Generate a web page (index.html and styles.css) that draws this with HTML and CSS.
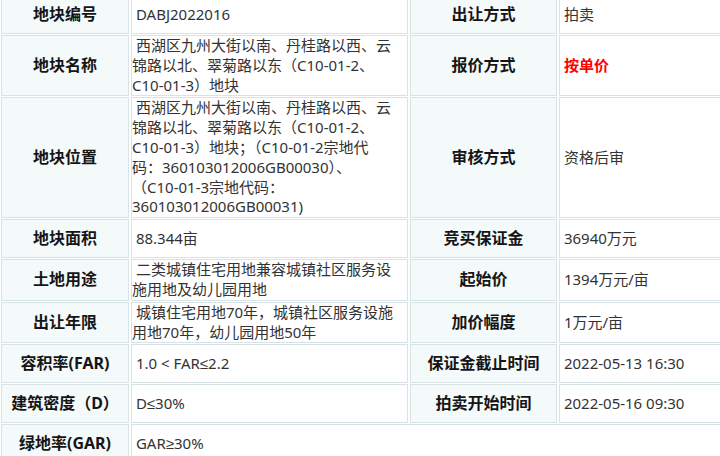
FILE: index.html
```html
<!DOCTYPE html>
<html lang="zh-CN">
<head>
<meta charset="utf-8">
<title>地块信息</title>
<link rel="stylesheet" href="styles.css">
</head>
<body>
<table class="info">
  <colgroup>
    <col class="c1">
    <col class="c2">
    <col class="c3">
    <col class="c4">
  </colgroup>
  <tbody>
    <tr>
      <td class="label">地块编号</td>
      <td class="val">&nbsp;DABJ2022016</td>
      <td class="label">出让方式</td>
      <td class="val">&nbsp;拍卖</td>
    </tr>
    <tr>
      <td class="label">地块名称</td>
      <td class="val">&nbsp;西湖区九州大街以南、丹桂路以西、云<br>锦路以北、翠菊路以东（C10-01-2、<br>C10-01-3）地块</td>
      <td class="label">报价方式</td>
      <td class="val"><span class="hot">&nbsp;按单价</span></td>
    </tr>
    <tr>
      <td class="label">地块位置</td>
      <td class="val">&nbsp;西湖区九州大街以南、丹桂路以西、云<br>锦路以北、翠菊路以东（C10-01-2、<br>C10-01-3）地块；（C10-01-2宗地代<br>码：360103012006GB00030）、<br>（C10-01-3宗地代码：<br>360103012006GB00031)</td>
      <td class="label">审核方式</td>
      <td class="val">&nbsp;资格后审</td>
    </tr>
    <tr>
      <td class="label">地块面积</td>
      <td class="val">&nbsp;88.344亩</td>
      <td class="label">竞买保证金</td>
      <td class="val">&nbsp;36940万元</td>
    </tr>
    <tr>
      <td class="label">土地用途</td>
      <td class="val">&nbsp;二类城镇住宅用地兼容城镇社区服务设<br>施用地及幼儿园用地</td>
      <td class="label">起始价</td>
      <td class="val">&nbsp;1394万元/亩</td>
    </tr>
    <tr>
      <td class="label">出让年限</td>
      <td class="val">&nbsp;城镇住宅用地70年，城镇社区服务设施<br>用地70年，幼儿园用地50年</td>
      <td class="label">加价幅度</td>
      <td class="val">&nbsp;1万元/亩</td>
    </tr>
    <tr>
      <td class="label">容积率(FAR)</td>
      <td class="val">&nbsp;1.0 &lt; FAR≤2.2</td>
      <td class="label">保证金截止时间</td>
      <td class="val">&nbsp;2022-05-13 16:30</td>
    </tr>
    <tr>
      <td class="label">建筑密度（D）</td>
      <td class="val">&nbsp;D≤30%</td>
      <td class="label">拍卖开始时间</td>
      <td class="val">&nbsp;2022-05-16 09:30</td>
    </tr>
    <tr>
      <td class="label">绿地率(GAR)</td>
      <td class="val" colspan="3">&nbsp;GAR≥30%</td>
    </tr>
  </tbody>
</table>
</body>
</html>
```

FILE: styles.css
```css
html, body {
  margin: 0;
  padding: 0;
  background: #ffffff;
  overflow: hidden;
}

.info {
  border-collapse: separate;
  border-spacing: 2px 1px;
  table-layout: fixed;
  width: 812px;
  margin: -6px 0 0 -1px;
  font-family: "Noto Sans", "Liberation Sans", "Noto Sans CJK SC", sans-serif;
}

.c1 { width: 128px; }
.c2 { width: 277px; }
.c3 { width: 147px; }
.c4 { width: 250px; }

.info td {
  border: 1px solid #d7e3e5;
  padding: 0;
  height: 37px;
  line-height: 19.8px;
  vertical-align: middle;
  white-space: nowrap;
  overflow: hidden;
}

.label {
  background: #f4f9fa;
  text-align: center;
  font-weight: bold;
  font-size: 16px;
  color: #151515;
}

.val {
  background: #ffffff;
  text-align: left;
  font-size: 15px;
  color: #333333;
}

.hot {
  color: #ff0000;
  font-weight: bold;
}
```
